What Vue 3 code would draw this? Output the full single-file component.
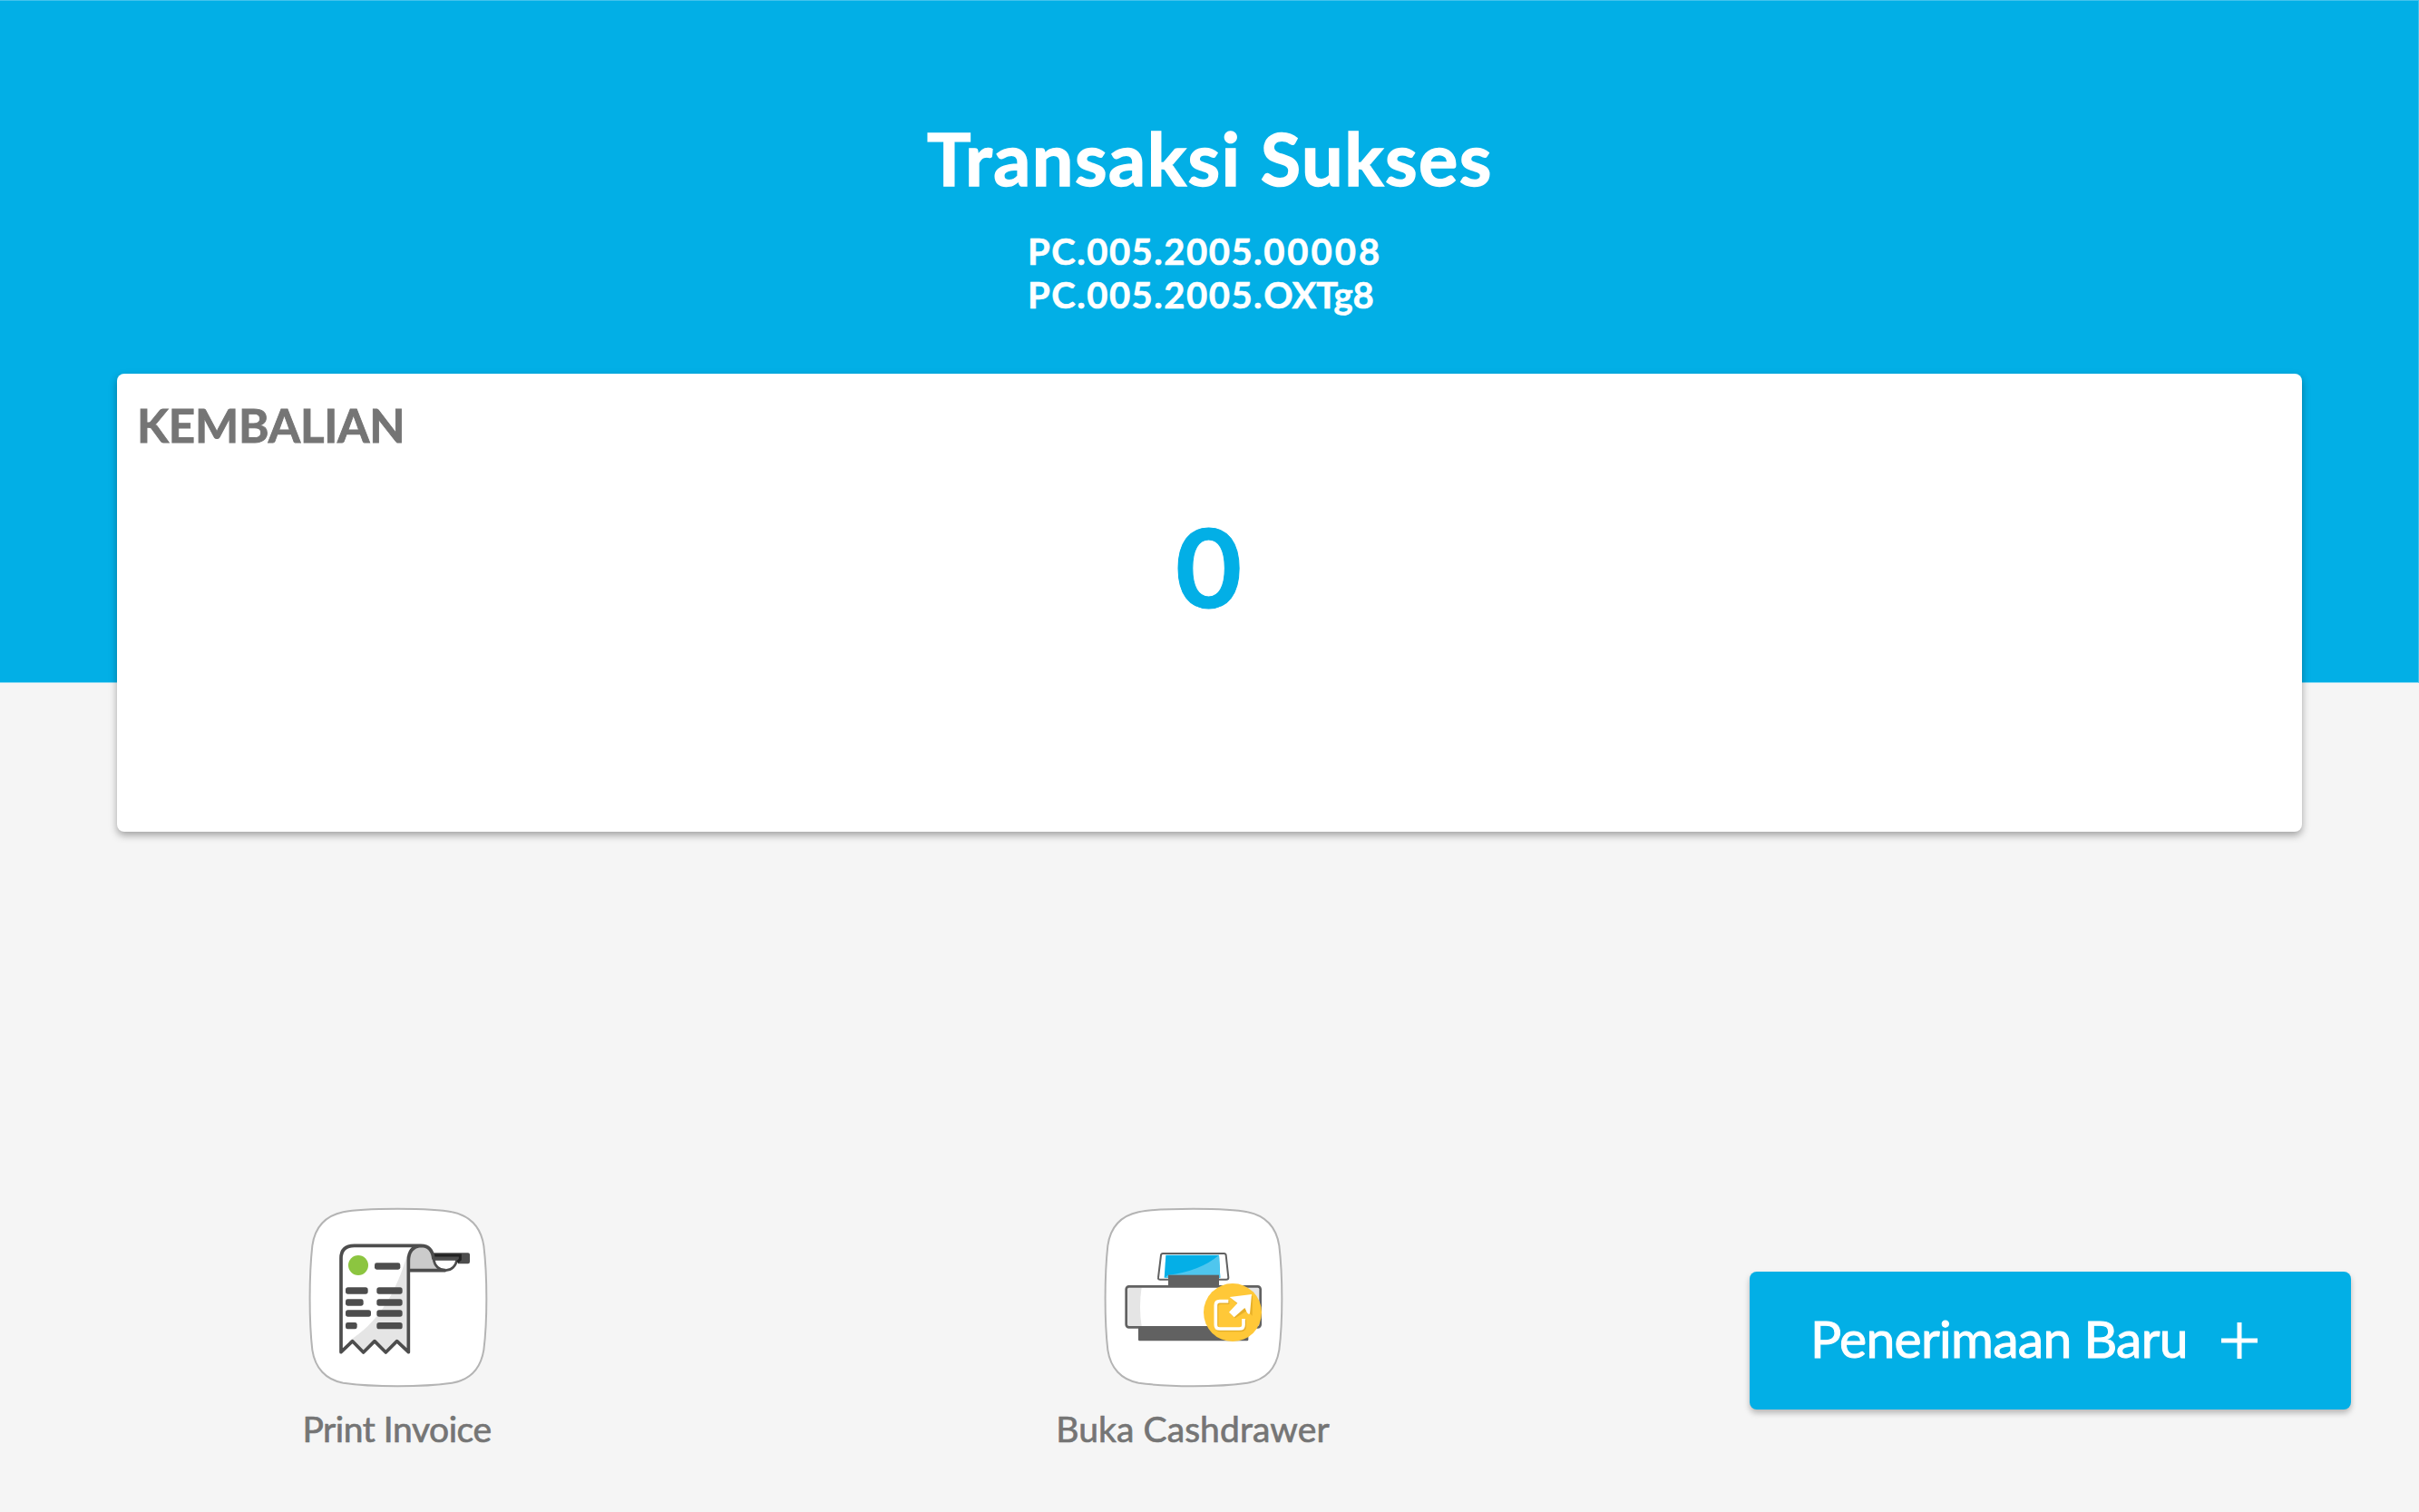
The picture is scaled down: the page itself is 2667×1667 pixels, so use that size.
<script setup>
const codes = [
  { prefix: 'PC.005.2005.', suffix: '00008', wide: true },
  { prefix: 'PC.005.2005.', suffix: 'OXTg8', wide: false },
]
const squircle =
  'M355 68 C430 68 500 71 535 79 C595 91 630 128 640 190 C652 290 652 440 640 535 C630 595 595 634 535 644 C440 658 270 658 175 644 C118 634 82 595 73 535 C62 440 62 290 73 190 C82 128 118 91 175 79 C210 71 280 68 355 68 Z'
</script>

<template>
  <main class="page">
    <header class="hero">
      <h1 class="title">Transaksi Sukses</h1>
      <div class="codes">
        <div v-for="code in codes" :key="code.suffix" class="code">{{ code.prefix }}<span :class="code.wide ? 'wide' : 'tight'">{{ code.suffix }}</span></div>
      </div>
    </header>

    <section class="card">
      <h2 class="card-label">KEMBALIAN</h2>
      <div class="amount">0</div>
    </section>

    <nav class="actions">
      <div class="action">
        <svg class="tile" viewBox="57 60 600 600">
          <path :d="squircle" fill="#fff" stroke="#b4b4b4" stroke-width="6" />
          <path d="M168 542 V232 Q168 190 212 190 H432 Q391 194 391 240 V542 L353 506 L316 543 L279 506 L242 543 L206 506 Z" fill="#fff" />
          <path d="M388 215 C350 350 290 445 190 508 L206 506 L242 543 L279 506 L316 543 L353 506 L391 542 Z" fill="#e5e5e5" />
          <path d="M391 272 V240 Q391 190 432 190 Q472 194 474 234 Q478 262 508 272 Z" fill="#cbcbcb" />
          <path d="M470 214 H588 Q594 214 594 220 V243 Q594 250 588 250 H555 L550 235 H474 Z" fill="#4d4d4d" />
          <path d="M474 235 H552 Q545 271 514 272 Q480 270 474 235 Z" fill="#fff" stroke="#4d4d4d" stroke-width="8" />
          <path d="M474 222 H562 V236 L553 244" fill="none" stroke="#222" stroke-width="9" />
          <path d="M391 272 H514 M474 235 Q470 190 432 190 H212 Q168 190 168 232 V542 L206 506 L242 543 L279 506 L316 543 L353 506 L391 542 V240 Q391 194 432 190" fill="none" stroke="#4d4d4d" stroke-width="11" stroke-linejoin="round" />
          <circle cx="225" cy="255" r="33" fill="#8cc540" />
          <g fill="#4d4d4d">
            <rect x="279" y="247" width="85" height="22" rx="7" />
            <rect x="183" y="328" width="74" height="22" rx="8" />
            <rect x="183" y="367" width="59" height="22" rx="7" />
            <rect x="183" y="403" width="84" height="22" rx="8" />
            <rect x="183" y="444" width="38" height="22" rx="7" />
            <rect x="286" y="328" width="85" height="22" rx="8" />
            <rect x="286" y="367" width="85" height="22" rx="8" />
            <rect x="286" y="403" width="85" height="22" rx="8" />
            <rect x="286" y="444" width="85" height="22" rx="8" />
          </g>
        </svg>
        <span class="action-label print">Print Invoice</span>
      </div>

      <div class="action">
        <svg class="tile" viewBox="57 60 600 600">
          <path :d="squircle" fill="#fff" stroke="#b4b4b4" stroke-width="6" />
          <g transform="translate(-141 0)">
            <path d="M396 216 H599 Q604 216 605 222 L613 296 Q613 302 606 302 H388 Q380 302 381 296 L390 222 Q391 216 396 216 Z" fill="#fff" stroke="#616161" stroke-width="6" />
            <path d="M406 221 H582 L586 296 H401 Z" fill="#04afe7" />
            <path d="M582 221 L586 296 H401 L414 287 Q520 274 582 221 Z" fill="#4fc6ee" />
            <rect x="414" y="287" width="168" height="40" fill="#616161" />
            <rect x="315" y="458" width="364" height="47" rx="4" fill="#616161" />
            <rect x="275" y="325" width="444" height="135" rx="9" fill="#fff" />
            <path d="M278 328 H326 Q316 393 326 457 H278 Z" fill="#e5e5e5" />
            <path d="M660 328 H716 V457 H670 Z" fill="#e5e5e5" />
            <rect x="275" y="325" width="444" height="135" rx="9" fill="none" stroke="#616161" stroke-width="8" />
            <circle cx="627" cy="411" r="96" fill="#ffc838" />
            <g transform="translate(3 4)" opacity=".25">
              <path d="M613 374 H584 Q571 374 571 387 V452 Q571 465 584 465 H649 Q663 465 663 452 V432" fill="none" stroke="#a46b00" stroke-width="12" />
              <path d="M619 360 L690 352 L689 418 L672 401 L632 426 L615 409 L641 381 Z" fill="#a46b00" />
            </g>
            <path d="M613 374 H584 Q571 374 571 387 V452 Q571 465 584 465 H649 Q663 465 663 452 V432" fill="none" stroke="#fff" stroke-width="11" />
            <path d="M617 360 L690 351 L684 415 Q677 420 670 401 L667 396 L632 427 L615 410 L643 380 Z" fill="#fff" />
          </g>
        </svg>
        <span class="action-label drawer">Buka Cashdrawer</span>
      </div>

      <button class="primary" type="button">
        <span class="primary-label">Penerimaan Baru</span>
        <svg class="plus" viewBox="0 0 40 40"><path d="M20 0 V40 M0 20 H40" stroke="#fff" stroke-width="5" /></svg>
      </button>
    </nav>
  </main>
</template>

<style>
body {
  margin: 0;
  background: #f5f5f5;
}
</style>

<style scoped>
.page {
  width: 2667px;
  height: 1667px;
  overflow: hidden;
  background: #f5f5f5;
  font-family: Lato, sans-serif;
  display: flex;
  flex-direction: column;
}
.hero {
  height: 753px;
  flex: none;
  box-sizing: border-box;
  padding-top: 124px;
  background: #02afe6;
  border: 1px solid #43c3ec;
  border-left: 0;
  border-bottom-color: #80d7f2;
  color: #fff;
  display: flex;
  flex-direction: column;
  align-items: center;
}
.title {
  margin: 0;
  padding-left: 2px;
  font-size: 81px;
  line-height: 97px;
  font-weight: 700;
  letter-spacing: 1.5px;
  -webkit-text-stroke: 1.4px currentColor;
  white-space: nowrap;
}
.codes {
  margin-top: 31px;
  width: 400px;
}
.code {
  font-size: 40px;
  line-height: 48px;
  font-weight: 700;
  letter-spacing: 1.5px;
  -webkit-text-stroke: 0.6px currentColor;
  white-space: nowrap;
}
.wide {
  letter-spacing: 3px;
}
.tight {
  letter-spacing: 0;
}
.card {
  position: relative;
  flex: none;
  box-sizing: border-box;
  width: 2409px;
  height: 505px;
  margin: -341px 0 0 129px;
  padding: 26px 24px 0 22px;
  background: #fff;
  border-radius: 8px;
  box-shadow: 0 4px 8px rgba(0, 0, 0, 0.34);
}
.card-label {
  margin: 0;
  font-size: 51px;
  line-height: 61px;
  font-weight: 700;
  letter-spacing: -0.2px;
  -webkit-text-stroke: 0.9px currentColor;
  color: #757575;
}
.amount {
  margin-top: 55px;
  text-align: center;
  font-family: Inter, sans-serif;
  font-size: 120px;
  line-height: 146px;
  font-weight: 600;
  -webkit-text-stroke: 1px currentColor;
  color: #02afe6;
}
.actions {
  margin-top: 413px;
  display: grid;
  grid-template-columns: 877px 878px 1fr;
  align-items: start;
}
.action {
  display: flex;
  flex-direction: column;
  align-items: center;
}
.tile {
  width: 200px;
  height: 200px;
}
.action-label {
  margin-top: 22px;
  padding-right: 2px;
  font-size: 39px;
  line-height: 47px;
  color: #757575;
  -webkit-text-stroke: 0.7px currentColor;
  white-space: nowrap;
}
.print {
  letter-spacing: -0.45px;
}
.drawer {
  letter-spacing: 0.1px;
}
.primary {
  width: 663px;
  height: 152px;
  margin: 72px 0 0 174px;
  padding: 0 0 0 67px;
  border: 0;
  border-radius: 8px;
  background: #02afe6;
  box-shadow: 0 4px 6px rgba(0, 0, 0, 0.25);
  color: #fff;
  font-family: inherit;
  display: flex;
  align-items: center;
}
.primary-label {
  width: 453px;
  padding-bottom: 7px;
  font-size: 57px;
  line-height: 68px;
  letter-spacing: -0.7px;
  -webkit-text-stroke: 1px currentColor;
  white-space: nowrap;
  text-align: left;
}
.plus {
  width: 40px;
  height: 40px;
}
</style>
